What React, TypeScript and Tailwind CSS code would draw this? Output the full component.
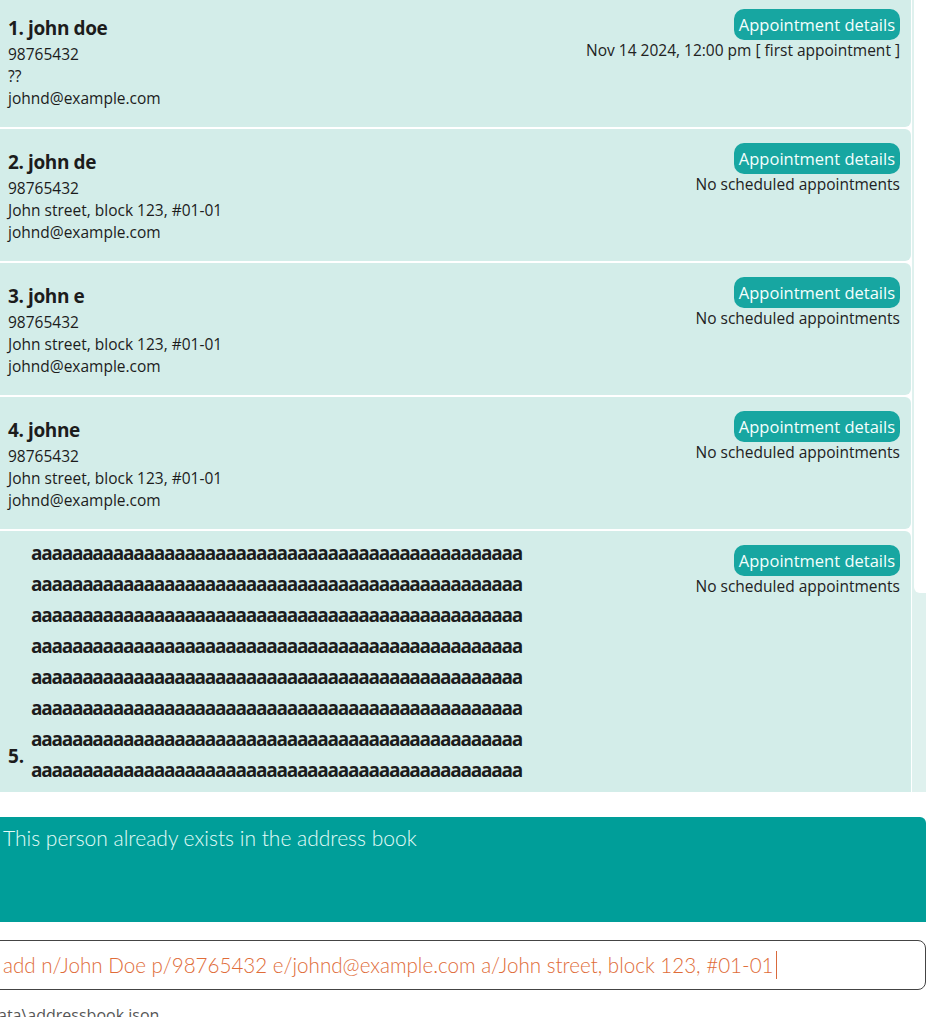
const persons = [
  { id: 1, name: "john doe", phone: "98765432", address: "??", email: "johnd@example.com", appt: "Nov 14 2024, 12:00 pm [ first appointment ]" },
  { id: 2, name: "john de", phone: "98765432", address: "John street, block 123, #01-01", email: "johnd@example.com", appt: "No scheduled appointments" },
  { id: 3, name: "john e", phone: "98765432", address: "John street, block 123, #01-01", email: "johnd@example.com", appt: "No scheduled appointments" },
  { id: 4, name: "johne", phone: "98765432", address: "John street, block 123, #01-01", email: "johnd@example.com", appt: "No scheduled appointments" },
];

const longLine = "a".repeat(48);
const longLines = Array.from({ length: 8 }, () => longLine);

function ApptColumn({ appt }: { appt: string }) {
  return (
    <div className="flex flex-col items-end pt-[14px] pr-[11px]">
      <span className="h-[31px] px-[5px] rounded-[10px] bg-[#17a6a1] text-[#f4fffd] text-[16.5px] leading-[31px]">
        Appointment details
      </span>
      <span className="text-[15.5px] leading-[20px] text-[#222]">{appt}</span>
    </div>
  );
}

function PersonCard({ p }: { p: (typeof persons)[number] }) {
  return (
    <div className="h-[132px] shrink-0 flex justify-between bg-[#d3ede9] rounded-r-md">
      <div className="pl-[8px] pt-[20px] text-[#1c1c1c]">
        <div className="text-[19px] font-bold leading-[26px] tracking-[-0.4px]">
          {p.id}. {p.name}
        </div>
        <div className="mt-[2px] text-[15.5px] leading-[22px]">
          <div>{p.phone}</div>
          <div>{p.address}</div>
          <div>{p.email}</div>
        </div>
      </div>
      <ApptColumn appt={p.appt} />
    </div>
  );
}

export default function App() {
  return (
    <div
      className="w-[926px] h-[1017px] overflow-hidden bg-white flex flex-col"
      style={{ fontFamily: '"Open Sans", "Noto Sans", sans-serif' }}
    >
      <div className="h-[792px] shrink-0 flex overflow-hidden">
        <div className="w-[911px] flex flex-col gap-[2px] -mt-[5px]">
          {persons.map((p) => (
            <PersonCard key={p.id} p={p} />
          ))}
          <div className="shrink-0 flex justify-between bg-[#d3ede9] rounded-tr-md">
            <div className="pl-[8px] pt-[7px] pb-[6px] flex items-end text-[#1c1c1c] text-[19px] font-bold">
              <span className="w-[23px] leading-[31px] mb-[14px]">5.</span>
              <div className="flex flex-col leading-[31px] tracking-[-1.25px]">
                {longLines.map((l, i) => (
                  <span key={i}>{l}</span>
                ))}
              </div>
            </div>
            <ApptColumn appt="No scheduled appointments" />
          </div>
        </div>
        <div className="w-[15px] border-l border-white bg-[#dff1ee] pl-[2px]">
          <div className="h-[593px] bg-white rounded-bl-md"></div>
        </div>
      </div>

      <div className="h-[25px] shrink-0"></div>

      <div className="h-[105px] shrink-0 bg-[#009e99] rounded-tr-md pl-[3px] pt-[6px]">
        <span className="text-[21px] font-light text-[#e3fcf8] leading-[30px]" style={{ fontFamily: "Lato, sans-serif" }}>
          This person already exists in the address book
        </span>
      </div>

      <div className="h-[18px] shrink-0"></div>

      <div className="h-[50px] shrink-0 -ml-[2px] border border-[#444] rounded-r-lg flex items-center pl-[4px]">
        <span className="text-[20.6px] font-light text-[#e06c38] leading-[28px]" style={{ fontFamily: "Lato, sans-serif" }}>
          add n/John Doe p/98765432 e/johnd@example.com a/John street, block 123, #01-01
        </span>
        <span className="w-[1px] h-[28px] bg-[#d96a3c] ml-[2px]"></span>
      </div>

      <div className="pt-[14px] -ml-[2px] text-[16px] leading-[22px] text-[#555]">ata\addressbook.json</div>
    </div>
  );
}
